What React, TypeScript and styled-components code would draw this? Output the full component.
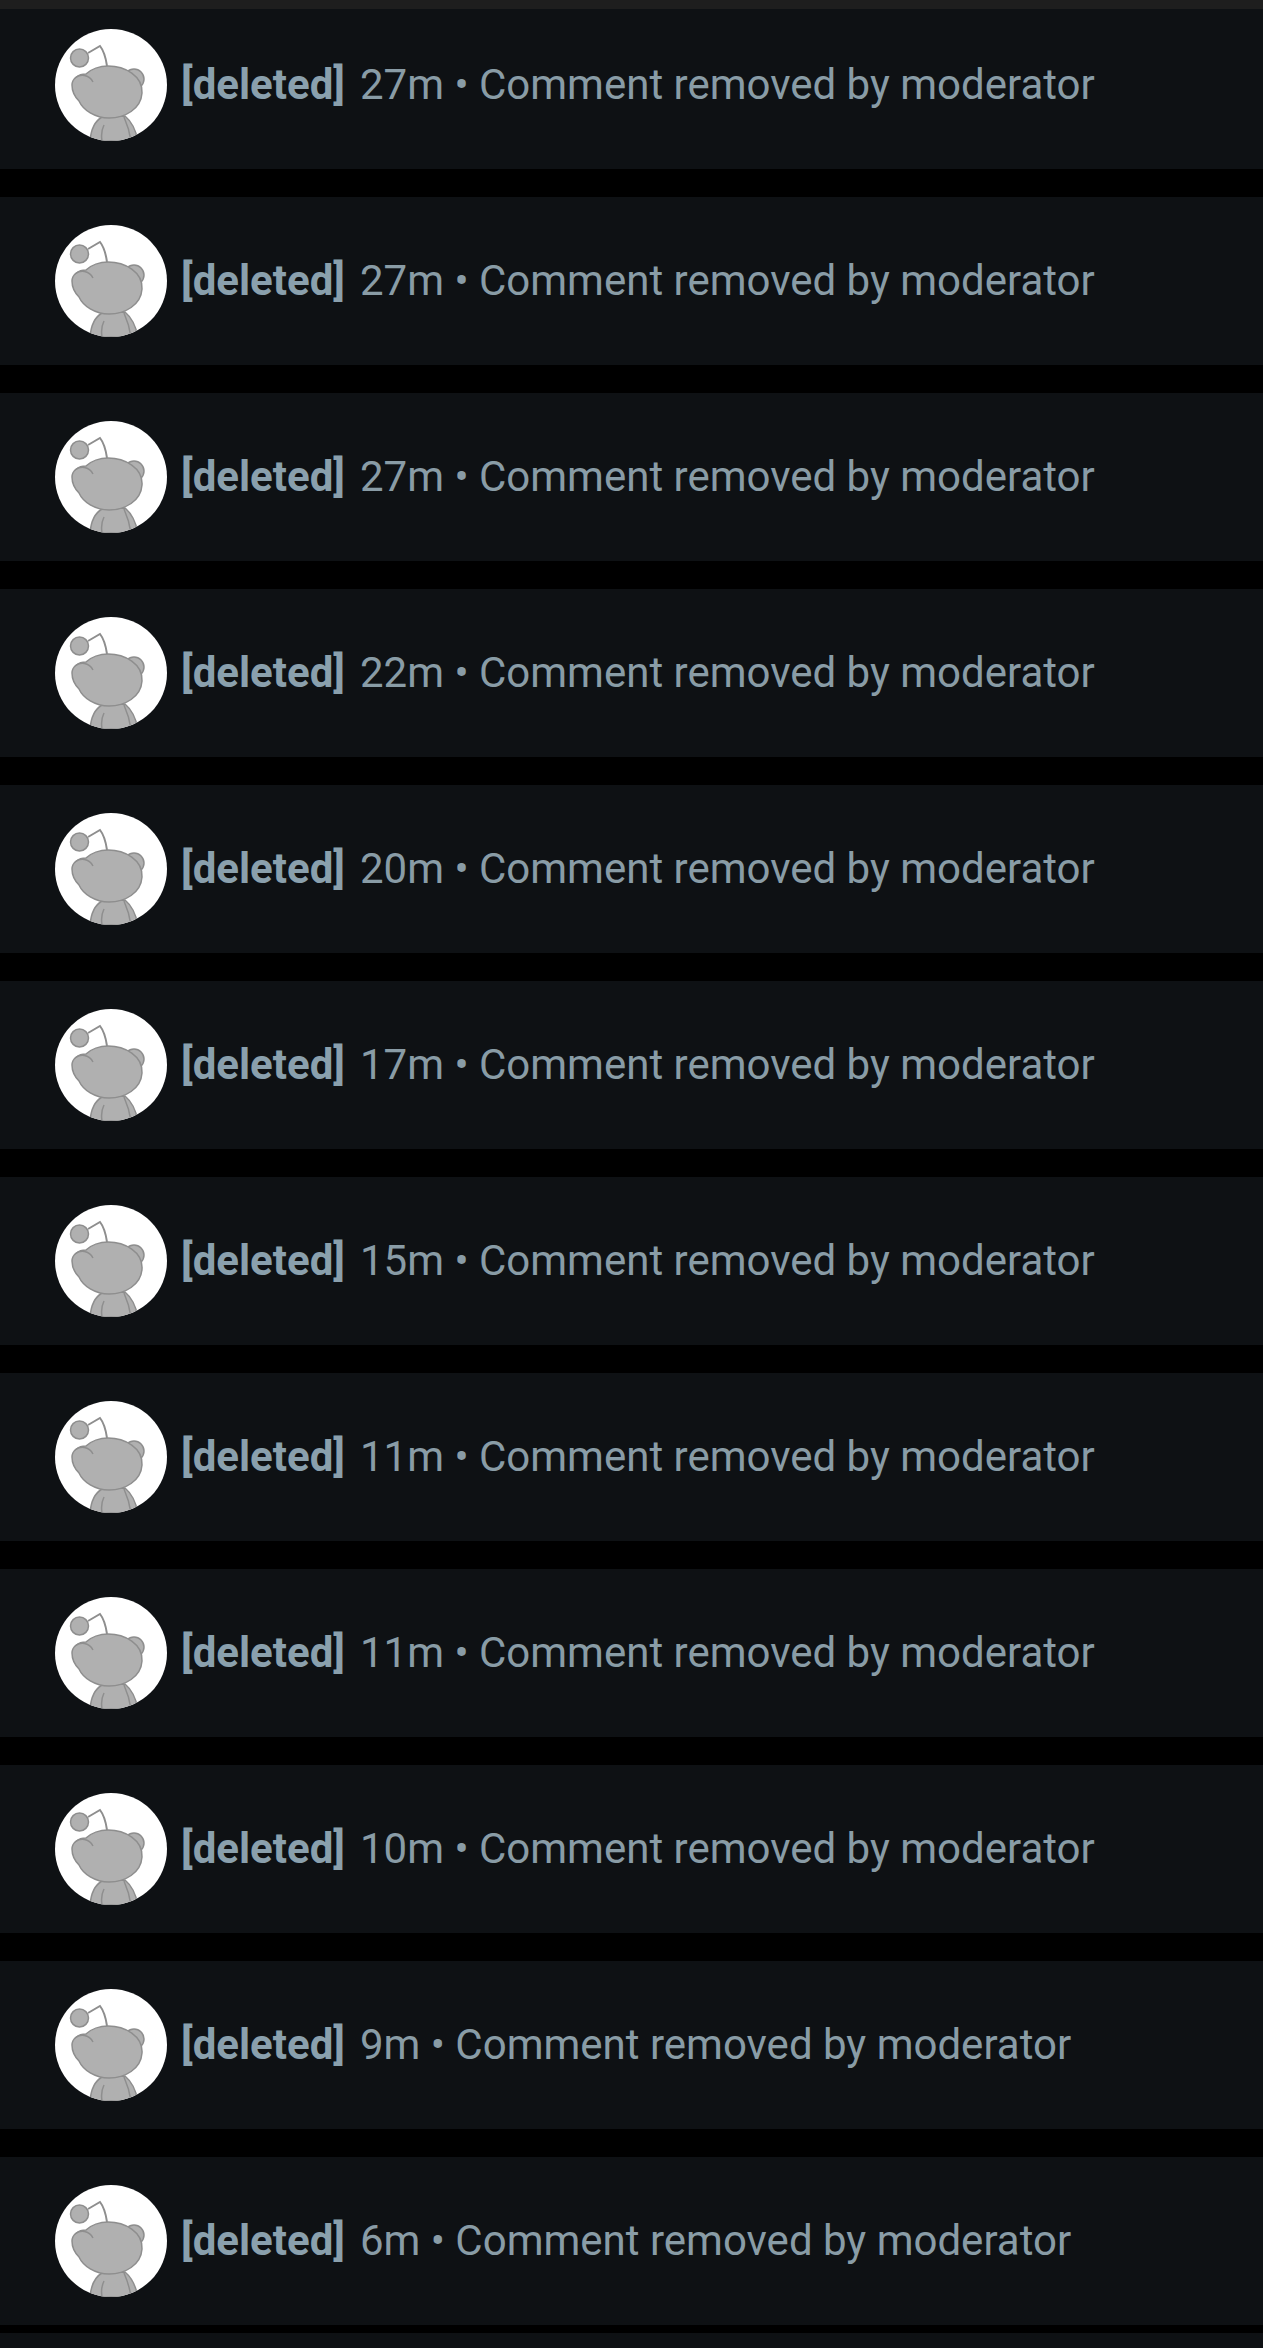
import React from 'react';
import styled, { createGlobalStyle } from 'styled-components';

const GlobalStyle = createGlobalStyle`
  html, body {
    margin: 0;
    padding: 0;
    background: #000;
    height: 2348px;
    overflow: hidden;
  }
`;

const TopBar = styled.div`
  height: 9px;
  background: #1e1e1e;
`;

const List = styled.div`
  display: flex;
  flex-direction: column;
  gap: 28px;
`;

const Row = styled.div<{ $first?: boolean }>`
  display: flex;
  align-items: center;
  gap: 14px;
  padding: ${(p) => (p.$first ? '20px' : '28px')} 55px 28px;
  background: #0e1114;
  font-family: Roboto, "Liberation Sans", sans-serif;
  font-size: 42px;
  line-height: 56px;
`;

const Avatar = styled.svg`
  width: 112px;
  height: 112px;
  flex: none;
  display: block;
`;

const Line = styled.div`
  display: flex;
  gap: 15px;
  margin-top: -1px;
  white-space: nowrap;
`;

const Author = styled.span`
  font-weight: 700;
  color: #8aa0ad;
`;

const Meta = styled.span`
  font-weight: 400;
  color: #899ca6;
`;

const NextStrip = styled.div`
  height: 15px;
  margin-top: -20px;
  background: #0e1114;
`;

const SnooAvatar = ({ id }: { id: number }) => (
  <Avatar viewBox="0 0 112 112">
    <defs>
      <clipPath id={`clip-${id}`}>
        <circle cx="56" cy="56" r="56" />
      </clipPath>
    </defs>
    <circle cx="56" cy="56" r="56" fill="#fff" />
    <g clipPath={`url(#clip-${id})`} fill="#b0b0b0" stroke="#8e8e8e" strokeWidth="1.5">
      <path d="M35 112 C36 100 40 92 47 88 L70 87 C76 92 81 102 83 112 Z" />
      <path d="M47 112 C46 106 47 100 49 96" fill="none" />
      <path d="M76 112 C75 105 73 97 69 88" fill="none" />
      <circle cx="79" cy="50" r="10" />
      <path d="M33 24 L45 17 C49 22 51 30 52 37" fill="none" strokeWidth="2" />
      <circle cx="24.5" cy="29" r="9" />
      <path d="M17 56 C17 50 23 45 31 45 C36 40 45 37 53 37 C70 37 88 47 87 64 C86 80 70 89 54 89 C40 89 28 81 24 72 C20 68 17 62 17 56 Z" />
      <path d="M20 49 C25 45 34 45 38 53" fill="none" />
    </g>
  </Avatar>
);

const times = ['27m', '27m', '27m', '22m', '20m', '17m', '15m', '11m', '11m', '10m', '9m', '6m'];

function App() {
  return (
    <>
      <GlobalStyle />
      <TopBar />
      <List>
        {times.map((time, i) => (
          <Row key={i} $first={i === 0}>
            <SnooAvatar id={i} />
            <Line>
              <Author>[deleted]</Author>
              <Meta>{time} • Comment removed by moderator</Meta>
            </Line>
          </Row>
        ))}
        <NextStrip />
      </List>
    </>
  );
}

export default App;
